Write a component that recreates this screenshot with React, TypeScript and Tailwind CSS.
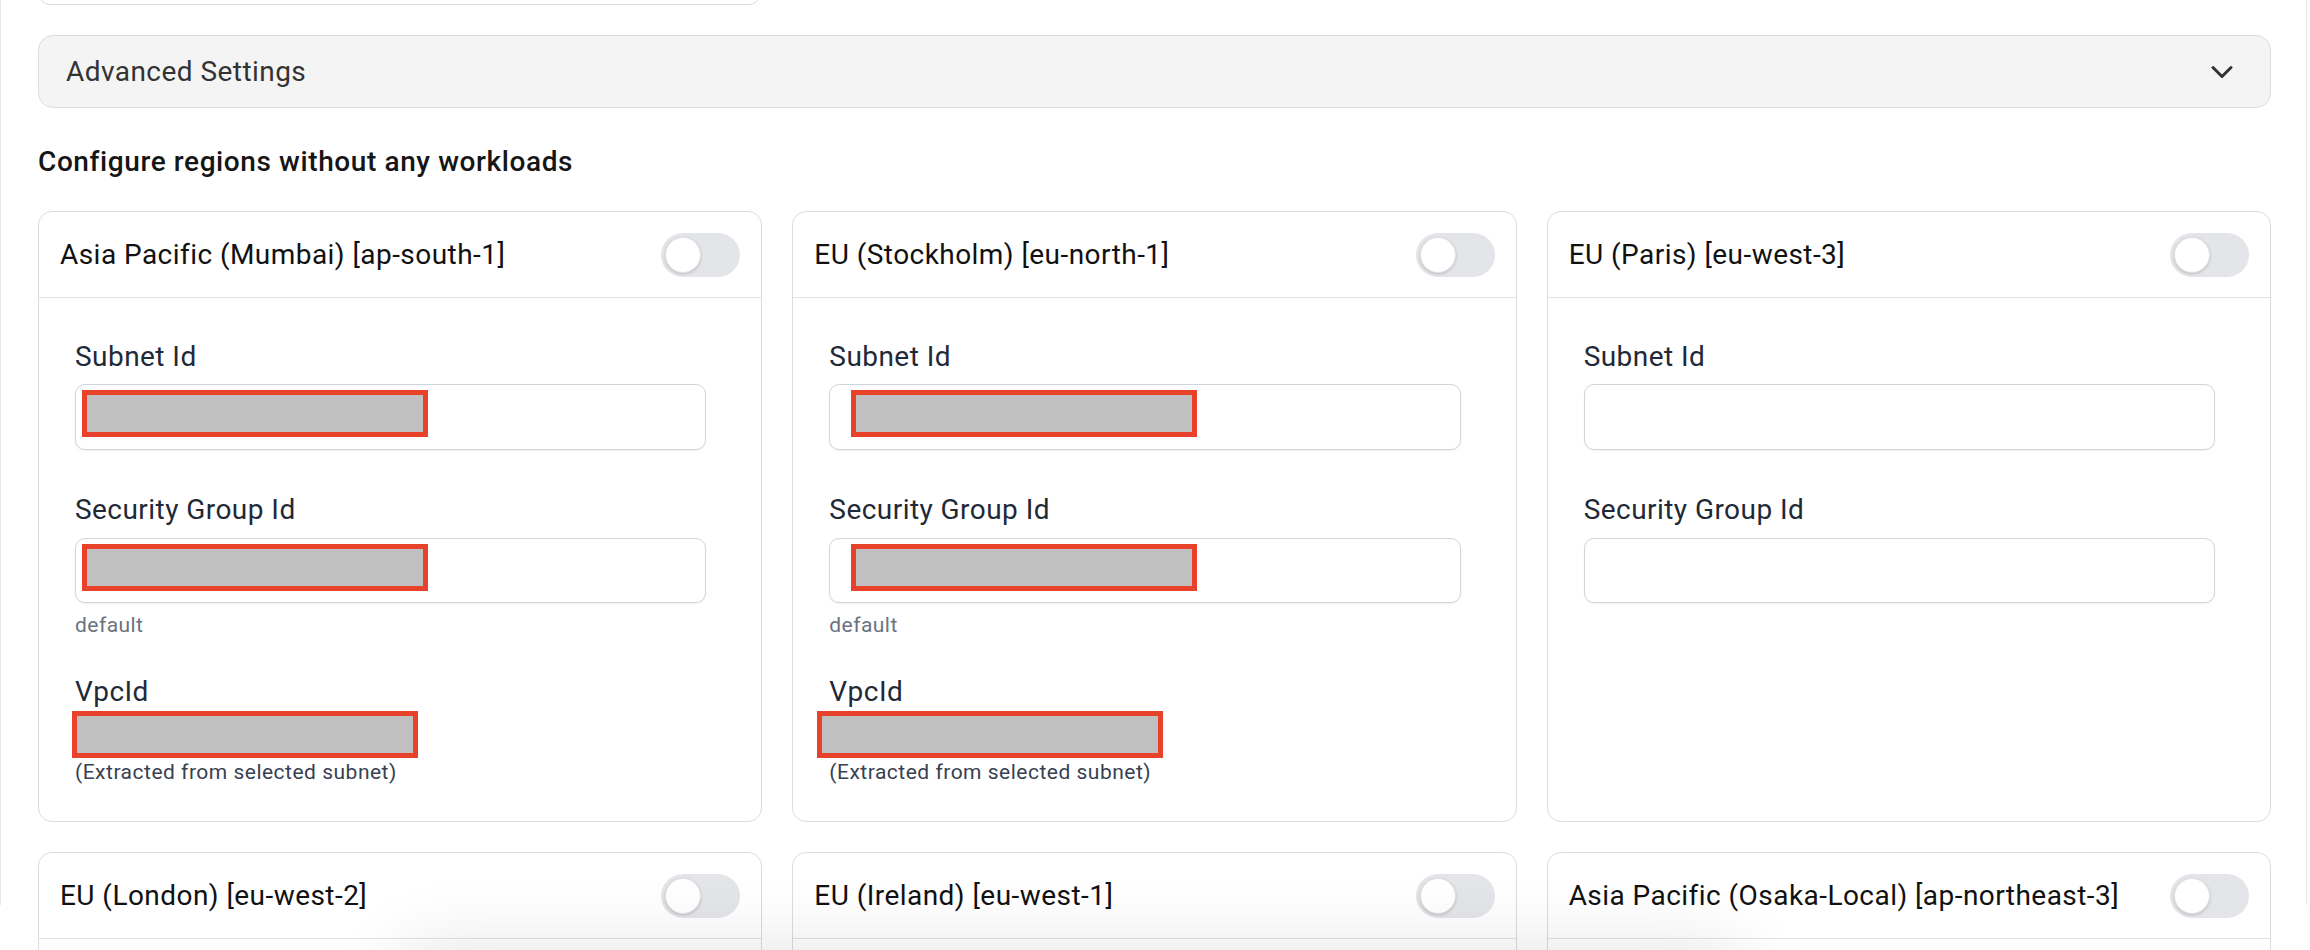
import { ChevronDown } from "lucide-react";

type Region = {
  name: string;
  filled: boolean;
  // left padding of the masked value inside the inputs, and shift of the VpcId mask
  inset: number;
  vpcShift: number;
  folded?: boolean;
};

const regions: Region[] = [
  { name: "Asia Pacific (Mumbai) [ap-south-1]", filled: true, inset: 6, vpcShift: -3 },
  { name: "EU (Stockholm) [eu-north-1]", filled: true, inset: 21, vpcShift: -12 },
  { name: "EU (Paris) [eu-west-3]", filled: false, inset: 0, vpcShift: 0 },
  { name: "EU (London) [eu-west-2]", filled: false, inset: 0, vpcShift: 0, folded: true },
  { name: "EU (Ireland) [eu-west-1]", filled: false, inset: 0, vpcShift: 0, folded: true },
  { name: "Asia Pacific (Osaka-Local) [ap-northeast-3]", filled: false, inset: 0, vpcShift: 0, folded: true },
];

const Redacted = ({ shift = 0 }: { shift?: number }) => (
  <div
    className="h-[47px] w-[346px] border-[5px] border-[#e8432a] bg-[#c0c0c0]"
    style={{ marginLeft: shift }}
  />
);

const Toggle = () => (
  <div className="h-[44px] w-[79px] shrink-0 rounded-full bg-[#e4e5e9] p-[4px]">
    <div className="h-[36px] w-[36px] rounded-full border border-[#e2e2e6] bg-white shadow-[0_1px_3px_rgba(0,0,0,0.18)]" />
  </div>
);

const RegionCard = ({ region }: { region: Region }) => (
  <div className="rounded-[14px] border border-[#dcdcdf] bg-white">
    <div className="flex h-[86px] items-center justify-between border-b border-[#e3e3e6] px-[21px]">
      <span className="text-[28px] leading-[36px] tracking-[0.45px] text-[#111]">{region.name}</span>
      <Toggle />
    </div>
    {region.folded ? (
      // body of the lower row lies below the fold
      <div className="h-[300px]" />
    ) : (
      <div className="pl-[36px] pr-[55px] pt-[41px] pb-[35px] tracking-[0.45px]">
        <label className="block text-[28px] leading-[36px] text-[#1f2937]">Subnet Id</label>
        <div className="mt-[9px] h-[66px] w-full rounded-[10px] border border-[#d3d4da] bg-white pt-[5px] shadow-[0_1px_2px_rgba(0,0,0,0.06)]">
          {region.filled && <Redacted shift={region.inset} />}
        </div>
        <label className="mt-[42px] block text-[28px] leading-[36px] text-[#1f2937]">Security Group Id</label>
        <div className="mt-[10px] h-[65px] w-full rounded-[10px] border border-[#d3d4da] bg-white pt-[5px] shadow-[0_1px_2px_rgba(0,0,0,0.06)]">
          {region.filled && <Redacted shift={region.inset} />}
        </div>
        {region.filled && (
          <>
            <p className="mt-[8px] text-[21px] leading-[28px] text-[#6b7280]">default</p>
            <label className="mt-[35px] block text-[28px] leading-[36px] text-[#1f2937]">VpcId</label>
            <div className="mt-[1px]">
              <Redacted shift={region.vpcShift} />
            </div>
            <p className="text-[21px] leading-[28px] tracking-[0.5px] text-[#374151]">(Extracted from selected subnet)</p>
          </>
        )}
      </div>
    )}
  </div>
);

const App = () => {
  return (
    <div className="relative h-[950px] w-[2310px] overflow-hidden bg-white font-['Roboto',sans-serif]">
      <div className="h-full w-[2307px] border-x border-[#e6e6e8] pl-[37px] pr-[35px]">
        {/* cut-off field above */}
        <div className="-mt-[45px] h-[50px] w-[723px] rounded-[12px] border border-[#dcdcdf] bg-white" />

        {/* Advanced Settings */}
        <div className="mt-[30px] flex h-[73px] items-center justify-between rounded-[15px] border border-[#dcdcdf] bg-[#f4f4f4] pl-[27px] pr-[30px]">
          <span className="text-[28px] leading-[36px] tracking-[0.45px] text-[#333]">Advanced Settings</span>
          <ChevronDown className="h-[36px] w-[36px] text-[#333]" strokeWidth={2} />
        </div>

        <h2 className="mt-[36px] text-[28px] font-medium leading-[36px] tracking-[0.6px] text-[#161616]">
          Configure regions without any workloads
        </h2>

        <div className="mt-[31px] grid grid-cols-3 gap-[30px]">
          {regions.map((r) => (
            <RegionCard key={r.name} region={r} />
          ))}
        </div>
      </div>

      {/* shadow of a floating panel just below the view */}
      <div className="absolute left-[420px] top-[970px] h-[80px] w-[1300px] rounded-[20px] bg-white shadow-[0_0_70px_30px_rgba(0,0,0,0.09)]" />
    </div>
  );
};

export default App;
